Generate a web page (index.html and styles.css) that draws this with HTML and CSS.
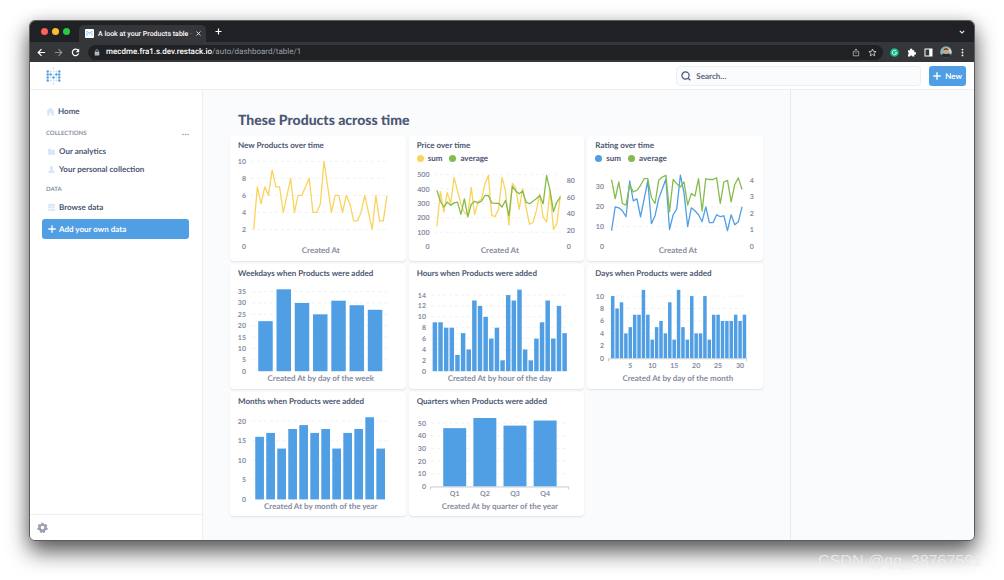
FILE: index.html
```html
<!DOCTYPE html>
<html lang="en">
<head>
<meta charset="utf-8">
<title>A look at your Products table</title>
<link rel="stylesheet" href="styles.css">
</head>
<body>
<div class="window">
  <div class="tabstrip">
    <div class="lights"><span class="light red"></span><span class="light amber"></span><span class="light green"></span></div>
    <div class="tab">
      <svg class="favicon" viewBox="0 0 9 9"><rect width="9" height="9" rx="1" fill="#fff"/><path d="M2 2v5M7 2v5M3.3 3.2l1.2 1.4 1.2-1.4" stroke="#7fb8ee" stroke-width="1.1" stroke-dasharray="1 .4" fill="none"/></svg>
      <span class="tab-title">A look at your Products table <i>·</i></span>
      <button class="bare" aria-label="Close tab"><svg width="5" height="5" viewBox="0 0 5 5"><path d="M.5.5l4 4M4.5.5l-4 4" stroke="#e8eaed" stroke-width=".9"/></svg></button>
    </div>
    <button class="bare new-tab" aria-label="New tab"><svg width="7" height="7" viewBox="0 0 7 7"><path d="M3.5.5v6M.5 3.5h6" stroke="#fff" stroke-width="1.2"/></svg></button>
    <button class="bare tab-menu" aria-label="Search tabs"><svg width="6" height="6" viewBox="0 0 6 6"><path d="M.8 1.8L3 4l2.2-2.2" stroke="#e8eaed" stroke-width="1.1" fill="none"/></svg></button>
  </div>
  <div class="toolbar">
    <button class="bare" aria-label="Back"><svg width="9" height="9" viewBox="0 0 9 9"><path d="M8.2 4.5H1.3M4.5 1.2L1.2 4.5l3.3 3.3" stroke="#fff" stroke-width="1.2" fill="none"/></svg></button>
    <button class="bare" aria-label="Forward"><svg width="9" height="9" viewBox="0 0 9 9"><path d="M.8 4.5h6.9M4.5 1.2l3.3 3.3-3.3 3.3" stroke="#8d8e92" stroke-width="1.1" fill="none"/></svg></button>
    <button class="bare" aria-label="Reload"><svg width="9" height="9" viewBox="0 0 9 9"><path d="M7.2 2.6A3.2 3.2 0 1 0 7.6 5.4" stroke="#fff" stroke-width="1.2" fill="none"/><path d="M8.2.6v3.6H4.6z" fill="#fff"/></svg></button>
    <div class="address">
      <svg width="6" height="7" viewBox="0 0 6 7"><rect x=".7" y="2.8" width="4.6" height="3.8" rx=".5" fill="#b5b7bb"/><path d="M1.7 3V1.9a1.3 1.3 0 0 1 2.6 0V3" stroke="#b5b7bb" stroke-width=".7" fill="none"/></svg>
      <span class="url"><b>mecdme.fra1.s.dev.restack.io</b>/auto/dashboard/table/1</span>
      <button class="bare" aria-label="Share"><svg width="8" height="9" viewBox="0 0 8 9"><path d="M2.8 3.4H1.3v4.4h5.4V3.4H5.2M4 5.6V1M2.6 2.3L4 .9l1.4 1.4" stroke="#b8babe" stroke-width=".8" fill="none"/></svg></button>
      <button class="bare" aria-label="Bookmark"><svg width="9" height="9" viewBox="0 0 9 9"><path d="M4.5 1l1 2.4 2.6.2-2 1.7.6 2.5-2.2-1.3-2.2 1.3.6-2.5-2-1.7 2.6-.2z" stroke="#dddfe2" stroke-width=".8" fill="none"/></svg></button>
    </div>
    <div class="extensions">
      <button class="bare" aria-label="Grammar"><svg width="9" height="9" viewBox="0 0 9 9"><circle cx="4.5" cy="4.5" r="4.3" fill="#14b88b"/><path d="M6.2 3.1A2.2 2.2 0 1 0 6.7 4.8H4.9" stroke="#fff" stroke-width=".9" fill="none"/></svg></button>
      <button class="bare" aria-label="Extensions"><svg width="9" height="9" viewBox="0 0 9 9"><path d="M1 2.3h2.1a1.2 1.2 0 1 1 2.2 0h2v2a1.2 1.2 0 1 1 0 2.2v2H5.4a1.1 1.1 0 0 0-2.2 0H1V6.4a1.1 1.1 0 0 0 0-2.1z" fill="#fff"/></svg></button>
      <button class="bare" aria-label="Side panel"><svg width="9" height="9" viewBox="0 0 9 9"><rect x="1" y="1" width="7" height="7" stroke="#fff" stroke-width="1" fill="none"/><path d="M5.2 1H8v7H5.2z" fill="#fff"/></svg></button>
      <button class="bare" aria-label="Profile"><svg width="12" height="12" viewBox="0 0 12 12"><circle cx="6" cy="6" r="5.8" fill="#8fb3b5"/><path d="M1 9a5.8 5.8 0 0 0 10 0L8.6 7.4H3.6z" fill="#1d2b33"/><path d="M6.5 1.4A5.8 5.8 0 0 1 11.6 7.5L9 6z" fill="#d5d9c9"/><circle cx="6.2" cy="5.4" r="2.7" fill="#d3a084"/><path d="M3.4 4.6a2.8 2.6 0 0 1 5.5-.3C7.6 3.2 5 3.2 3.4 4.6z" fill="#3b2c29"/></svg></button>
      <button class="bare" aria-label="Browser menu"><svg width="9" height="9" viewBox="0 0 9 9"><g fill="#fff"><circle cx="4.5" cy="1.6" r=".9"/><circle cx="4.5" cy="4.5" r=".9"/><circle cx="4.5" cy="7.4" r=".9"/></g></svg></button>
    </div>
  </div>

  <header class="app-header">
    <a class="logo" href="#" aria-label="Metabase">
      <svg width="15" height="18" viewBox="0 0 15 18"><g fill="#509ee3"><circle cx="1.7" cy="4.5" r="1.2"/><circle cx="1.7" cy="7.5" r="1.2"/><circle cx="1.7" cy="10.5" r="1.2"/><circle cx="1.7" cy="13.5" r="1.2"/><circle cx="13.3" cy="4.5" r="1.2"/><circle cx="13.3" cy="7.5" r="1.2"/><circle cx="13.3" cy="10.5" r="1.2"/><circle cx="13.3" cy="13.5" r="1.2"/><circle cx="4.6" cy="7.5" r="1.2"/><circle cx="10.4" cy="7.5" r="1.2"/><circle cx="7.5" cy="10.5" r="1.2"/></g><g fill="#c9e0f7"><circle cx="7.5" cy="1.4" r=".9"/><circle cx="7.5" cy="4.5" r=".9"/><circle cx="7.5" cy="7.5" r=".9"/><circle cx="7.5" cy="13.5" r=".9"/><circle cx="7.5" cy="16.5" r=".9"/><circle cx="4.6" cy="4.5" r=".9"/><circle cx="10.4" cy="4.5" r=".9"/><circle cx="4.6" cy="10.5" r=".9"/><circle cx="10.4" cy="10.5" r=".9"/><circle cx="4.6" cy="13.5" r=".9"/><circle cx="10.4" cy="13.5" r=".9"/></g></svg>
    </a>
    <label class="search">
      <svg width="10" height="10" viewBox="0 0 10 10"><circle cx="4.5" cy="4.5" r="3.6" stroke="#4c5773" stroke-width="1.2" fill="none"/><path d="M7.2 7.2L9.3 9.3" stroke="#4c5773" stroke-width="1.3"/></svg>
      <input type="text" placeholder="Search…" aria-label="Search">
    </label>
    <button class="primary new"><svg width="8" height="8" viewBox="0 0 8 8"><path d="M4 .3v7.4M.3 4h7.4" stroke="#fff" stroke-width="1.4"/></svg>New</button>
  </header>

  <div class="app-body">
    <nav class="sidebar">
      <a class="item home" href="#"><svg width="9" height="9" viewBox="0 0 9 9"><path d="M4.5.6L.6 4l.6.6v3.8h2.3V5.8h2v2.6h2.3V4.6l.6-.6z" fill="#d5e7f9"/></svg>Home</a>
      <div class="section"><h2>COLLECTIONS</h2><button class="bare" aria-label="Collection options"><svg width="7" height="3" viewBox="0 0 7 3"><g fill="#949aab"><circle cx="1" cy="1.5" r=".8"/><circle cx="3.5" cy="1.5" r=".8"/><circle cx="6" cy="1.5" r=".8"/></g></svg></button></div>
      <a class="item" href="#"><svg width="9" height="9" viewBox="0 0 9 9"><path d="M1 1.8h2.6l.9 1H8v5H1z" fill="#d5e7f9"/></svg>Our analytics</a>
      <a class="item" href="#"><svg width="9" height="9" viewBox="0 0 9 9"><path d="M4.5 1a1.7 1.9 0 0 1 .9 3.5v.8c1.5.2 2.3.9 2.3 2.7H1.3c0-1.800.8-2.500 2.300-2.700v-.8A1.700 1.900 0 0 1 4.500 1z" fill="#d5e7f9"/></svg>Your personal collection</a>
      <div class="section"><h2>DATA</h2></div>
      <a class="item" href="#"><svg width="9" height="9" viewBox="0 0 9 9"><g fill="#d5e7f9"><ellipse cx="4.5" cy="1.9" rx="3.6" ry="1.2"/><path d="M.9 3c1.5 1 5.7 1 7.2 0v1.700c-1.500 1-5.700 1-7.200 0zM.9 5.700c1.500 1 5.700 1 7.200 0v1.600c-1.500 1.200-5.700 1.200-7.200 0z"/></g></svg>Browse data</a>
      <button class="primary add"><svg width="8" height="8" viewBox="0 0 8 8"><path d="M4 .3v7.4M.3 4h7.4" stroke="#fff" stroke-width="1.3"/></svg>Add your own data</button>
      <div class="sidebar-foot"><button class="bare" aria-label="Settings"><svg width="11" height="11" viewBox="0 0 11 11"><path fill-rule="evenodd" d="M4.5.7h2l.3 1.4 1 .5 1.3-.6 1.2 1.5-.8 1.1.2.9 1.1.7-.5 1.8-1.5.1-.7.8.1 1.4-1.7.6-1-1.1-1 1.1-1.7-.6.1-1.4-.7-.8-1.5-.1-.5-1.8 1.1-.7.2-.9-.8-1.1L1.9 2l1.3.6 1-.5zM5.5 3.8a1.8 1.8 0 1 0 0 3.6 1.8 1.8 0 0 0 0-3.6z" fill="#9aa0b0"/></svg></button></div>
    </nav>
    <main class="dashboard">
      <h1>These Products across time</h1>
      <div class="cards" id="cards"></div>
    </main>
    <aside class="related"></aside>
  </div>
</div>
<div class="watermark">CSDN @qq_38767591</div>
<script src="charts.js"></script>
</body>
</html>
```

FILE: styles.css
```css
* { box-sizing: border-box; }
body {
  margin: 0;
  min-height: 100vh;
  padding: 20px 29px 39px;
  display: flex;
  background: #fff;
  color: #4c5773;
  font: 700 8px/12px Lato, "Liberation Sans", sans-serif;
  text-rendering: geometricPrecision;
  position: relative;
}
button, input { font: inherit; color: inherit; text-rendering: inherit; }
a { color: inherit; text-decoration: none; }
h1, h2, h3 { margin: 0; }
svg { display: block; flex: none; }
.bare { display: flex; padding: 0; border: 0; background: none; }

.window {
  flex: 1;
  min-width: 0;
  display: flex;
  flex-direction: column;
  overflow: hidden;
  border: 1px solid #5c5c5e;
  border-radius: 6px;
  background: #fff;
  box-shadow: 0 11px 22px rgba(0, 0, 0, .62), 0 2px 16px rgba(0, 0, 0, .14);
}

.tabstrip {
  height: 21px;
  display: flex;
  align-items: center;
  padding: 0 9px 0 11px;
  background: #202124;
  color: #fff;
}
.lights { display: flex; gap: 4px; margin-right: 9px; }
.light { width: 7px; height: 7px; border-radius: 50%; }
.red { background: #fe5f57; }
.amber { background: #febc2e; }
.green { background: #28c840; }
.tab {
  width: 127px;
  height: 17px;
  align-self: flex-end;
  display: flex;
  align-items: center;
  gap: 4px;
  padding: 0 6px;
  border-radius: 5px 5px 0 0;
  background: #35363a;
  font: 500 7px/12px Roboto, sans-serif;
}
.favicon { width: 9px; height: 9px; }
.tab-title { flex: 1; white-space: nowrap; }
.tab-title i { color: #8d8e92; }
.new-tab { margin-left: 9px; }
.tab-menu { margin-left: auto; }

.toolbar {
  height: 20px;
  display: flex;
  align-items: center;
  gap: 8px;
  padding: 0 6px 0 7px;
  background: #35363a;
}
.address {
  flex: 1;
  height: 15px;
  display: flex;
  align-items: center;
  gap: 8px;
  padding: 0 6px;
  border-radius: 8px;
  background: #202124;
  color: #9aa0a6;
  font: 400 8px/12px Roboto, sans-serif;
}
.url { flex: 1; margin-left: -2px; white-space: nowrap; }
.url b { font-weight: 500; color: #fff; }
.extensions { display: flex; align-items: center; gap: 6px; margin-left: -2px; }
.extensions .bare { width: 11px; justify-content: center; }

.app-header {
  height: 28px;
  display: flex;
  align-items: center;
  gap: 8px;
  padding: 0 8px 0 16px;
  border-bottom: 1px solid #eeeff1;
  background: #fff;
}
.logo { margin-right: auto; }
.search {
  flex: 0 1 245px;
  height: 20px;
  display: flex;
  align-items: center;
  gap: 5px;
  padding: 0 4px;
  border: 1px solid #eeeff1;
  border-radius: 4px;
  background: #f9fbfc;
}
.search input { flex: 1; min-width: 0; padding: 0; border: 0; outline: 0; background: none; }
.search input::placeholder { color: #5c6680; opacity: 1; }
.primary {
  height: 20px;
  display: flex;
  align-items: center;
  padding: 0 5px;
  border: 0;
  border-radius: 3px;
  background: #509ee3;
  color: #fff;
}
.new { gap: 4px; padding: 0 4px; }

.app-body { flex: 1; display: flex; }
.sidebar {
  width: 173px;
  display: flex;
  flex-direction: column;
  padding: 12px 13px 0 12px;
  border-right: 1px solid #eeeff1;
  background: #fff;
}
.item { display: flex; align-items: center; gap: 3px; height: 18px; padding-left: 5px; }
.home { padding-left: 4px; }
.section { display: flex; align-items: center; justify-content: space-between; height: 12px; margin-top: 6px; padding-left: 4px; color: #949aab; }
.home + .section { margin-top: 8px; }
.section + .item { margin-top: 2px; }
.section h2 { font-size: 6px; line-height: 12px; font-weight: 900; }
.add { gap: 3px; margin-top: 3px; padding-left: 6px; }
.sidebar-foot {
  margin: auto -13px 0 -12px;
  height: 26px;
  display: flex;
  align-items: center;
  padding-left: 7px;
  border-top: 1px solid #eeeff1;
}

.dashboard { flex: 1; min-width: 0; padding: 20px 27px; background: #f9fbfc; }
.dashboard h1 { padding-left: 8px; font-size: 14px; line-height: 20px; font-weight: 900; }
.cards { display: grid; grid-template-columns: repeat(3, minmax(0, 1fr)); gap: 3px; margin-top: 6px; }
.card { border-radius: 4px; background: #fff; box-shadow: 0 1px 2px rgba(0, 0, 0, .1); }
.card h3 { height: 17px; padding-left: 8px; font-size: 8px; line-height: 18px; }
.legend { display: flex; gap: 7px; height: 10px; padding-left: 8px; line-height: 9px; }
.legend span { display: flex; align-items: center; gap: 4px; }
.legend span::before { content: ""; width: 7px; height: 7px; border-radius: 50%; background: #509ee3; }
.legend .yellow::before { background: #f9d45c; }
.legend .leaf::before { background: #84bb4c; }
.chart { width: 100%; height: auto; }
.chart text { font-size: 7px; fill: #868da1; }
.chart .axis-title { font-size: 8px; }
.chart .grid { stroke: #f0f1f3; stroke-width: 1; stroke-dasharray: 3 3; }
.chart .axis { stroke: #c5c9d1; stroke-width: 1; fill: none; }
.chart .bar { fill: #509ee3; }
.chart polyline { fill: none; stroke-width: 1.3px; stroke-linejoin: round; }

.related { width: 184px; border-left: 1px solid #e8eaed; background: #f9fbfc; }

.watermark {
  position: absolute;
  right: 22px;
  bottom: 8px;
  color: rgba(255, 255, 255, .72);
  font: 400 16px/20px "Liberation Sans", sans-serif;
  text-shadow: 0 0 1px rgba(0, 0, 0, .12);
}
```

FILE: charts.js
```js
const BLUE = "#509ee3", GREEN = "#84bb4c", YELLOW = "#f9d45c";

// zero: baseline y; unit: height of one value; all in card coordinates.
const charts = [
  { title: "New Products over time", label: "Created At", zero: 110.7, unit: 8.54, ticks: [0, 2, 4, 6, 8, 10], tickX: 16, grid: [21, 158], line: [23.7, 157.3],
    series: [{ color: YELLOW, data: [2,7,5,7,6,9,7,7,4,6,8,4,6,6,7,8,4,4,5,10,7,4,6,6,4,6,5,3,3,4,6,4,2,6,3,3,6] }] },
  { title: "Price over time", label: "Created At", legend: ["yellow", "leaf"], zero: 110.7, unit: 0.144, ticks: [0, 100, 200, 300, 400, 500], tickX: 20.5, grid: [25, 152], line: [28, 151.6],
    right: { ticks: [0, 20, 40, 60, 80], unit: 0.825, x: 158 },
    series: [
      { color: YELLOW, data: [140,382,240,377,300,480,385,296,236,220,412,222,312,328,435,495,215,210,262,481,386,150,440,405,259,403,273,155,167,248,365,204,171,391,120,160,358] },
      { color: GREEN, right: true, data: [68,55,48,54,50,53,54,39,58,36,51,55,53,55,62,62,53,52.5,52.5,48,56,37.5,73,67.5,64,67.5,54,52,55,58,62,52,86.5,68,42.5,54,60] }] },
  { title: "Rating over time", label: "Created At", legend: ["blue", "leaf"], zero: 110.7, unit: 1.99, ticks: [0, 10, 20, 30], tickX: 17, grid: [22, 156], line: [24.6, 155.3],
    right: { ticks: [0, 1, 2, 3, 4], unit: 16.58, x: 163 },
    series: [
      { color: BLUE, data: [8,20,19.5,18,15,33,23,24,15,24,33,11.5,15.5,24,29,34,8.5,16,19,36,27,10,19.5,18,16,12.5,20,12,12,16,15,15.5,8,16,11,12.5,20] },
      { color: GREEN, right: true, data: [4.05,2.9,3.9,2.6,2.5,3.75,3.3,3.4,3.7,4.1,4.1,2.95,2.6,4,4.2,4.3,2.1,4.05,3.8,3.6,3.9,2.5,3.2,3.05,4.1,2.15,4.1,4.05,4.05,4.15,2.6,3.9,4,2.7,3.75,4.15,3.45] }] },
  { title: "Weekdays when Products were added", label: "Created At by day of the week", zero: 107.4, unit: 2.28, ticks: [0, 5, 10, 15, 20, 25, 30, 35], tickX: 16, grid: [22, 157],
    bars: { x: 28.3, pitch: 18.3, width: 14.5, data: [22,36,30,25,31,29,27] } },
  { title: "Hours when Products were added", label: "Created At by hour of the day", zero: 107.4, unit: 5.45, ticks: [0, 2, 4, 6, 8, 10, 12, 14], tickX: 17, grid: [22, 158],
    bars: { x: 23.7, pitch: 5.65, width: 4.5, data: [9,9,8,8,3,7,4,13,12,10,6,8,2,14,13,15,4,2,6,9,13,6,12,7] } },
  { title: "Days when Products were added", label: "Created At by day of the month", zero: 94.4, unit: 6.23, ticks: [0, 2, 4, 6, 8, 10], tickX: 17, grid: [22, 160], axis: [21.5, 160],
    bars: { x: 24, pitch: 4.4, width: 3.5, data: [10,8,9,4,5,7,7,11,7,3,5,6,4,9,3,11,5,3,10,4,4,10,3,7,7,6,6,6,7,6,7], names: { 4: "5", 9: "10", 14: "15", 19: "20", 24: "25", 29: "30" } } },
  { title: "Months when Products were added", label: "Created At by month of the year", zero: 107.6, unit: 3.92, ticks: [0, 5, 10, 15, 20], tickX: 16, grid: [22, 158],
    bars: { x: 25.3, pitch: 11.03, width: 8.7, data: [16,17,13,18,19,17,18,13,17,18,21,13] } },
  { title: "Quarters when Products were added", label: "Created At by quarter of the year", zero: 94.6, unit: 1.27, ticks: [0, 10, 20, 30, 40, 50], tickX: 17, grid: [22, 160], axis: [21.5, 160],
    bars: { x: 34.3, pitch: 30.2, width: 23, data: [46,54,48,52], names: { 0: "Q1", 1: "Q2", 2: "Q3", 3: "Q4" } } }
];

const text = (x, y, anchor, value, cls = "") =>
  `<text x="${x}" y="${y}" text-anchor="${anchor}" class="${cls}">${value}</text>`;

function draw(c) {
  const top = c.legend ? 27 : 17;
  const y = (v, unit = c.unit) => c.zero - v * unit;
  let out = "";
  for (const t of c.ticks) {
    if (t) out += `<line class="grid" x1="${c.grid[0]}" x2="${c.grid[1]}" y1="${y(t)}" y2="${y(t)}"/>`;
    out += text(c.tickX, y(t) + 2.5, "end", t);
  }
  if (c.right) for (const t of c.right.ticks) out += text(c.right.x, y(t, c.right.unit) + 2.5, "start", t);
  for (const s of c.series || []) {
    const step = (c.line[1] - c.line[0]) / (s.data.length - 1);
    const pts = s.data.map((v, i) => `${c.line[0] + i * step},${y(v, s.right ? c.right.unit : c.unit)}`);
    out += `<polyline stroke="${s.color}" points="${pts.join(" ")}"/>`;
  }
  if (c.bars) c.bars.data.forEach((v, i) => {
    const x = c.bars.x + i * c.bars.pitch;
    out += `<rect class="bar" x="${x}" y="${y(v)}" width="${c.bars.width}" height="${v * c.unit}"/>`;
    if (c.bars.names && c.bars.names[i]) out += text(x + c.bars.width / 2, 104, "middle", c.bars.names[i]);
  });
  if (c.axis) out += `<path class="axis" d="M${c.axis[0]} ${c.zero + 3}v-2.5H${c.axis[1]}v2.5"/>`;
  out += text(91, 117, "middle", c.label, "axis-title");
  return `<svg class="chart" viewBox="0 ${top} 176 ${125 - top}">${out}</svg>`;
}

document.getElementById("cards").innerHTML = charts.map(c => `<section class="card"><h3>${c.title}</h3>${
  c.legend ? `<div class="legend"><span class="${c.legend[0]}">sum</span><span class="${c.legend[1]}">average</span></div>` : ""
}${draw(c)}</section>`).join("");
```
